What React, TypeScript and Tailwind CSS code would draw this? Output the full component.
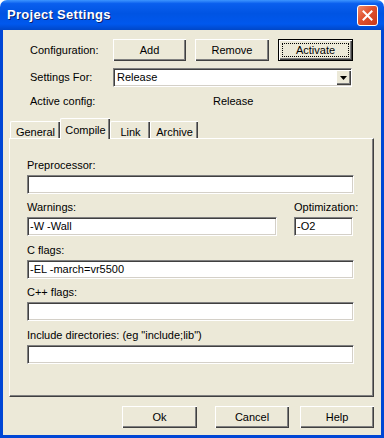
import React from 'react'

// XP (Luna) style dialog: Project Settings
const field =
  'h-[19px] bg-white border border-t-[#808080] border-l-[#808080] border-b-white border-r-white shadow-[inset_1px_1px_0_#404040,inset_-1px_-1px_0_#d4d0c8] px-[2px] flex items-center text-[11px] leading-none'

const raised =
  'bg-[#ECE9D8] shadow-[inset_1px_1px_0_#ffffff,inset_-1px_-1px_0_#404040,inset_-2px_-2px_0_#808080]'

const Button = ({ label, w, isDefault }: { label: string; w: string; isDefault?: boolean }) => {
  if (isDefault) {
    return (
      <div className={`${w} h-[22px] border border-black flex`}>
        <div className={`flex-1 ${raised} flex items-center justify-center p-[3px]`}>
          <div className="w-full h-full border border-dotted border-black flex items-center justify-center text-[11px]">
            {label}
          </div>
        </div>
      </div>
    )
  }
  return (
    <div className={`${w} h-[22px] ${raised} flex items-center justify-center text-[11px]`}>
      {label}
    </div>
  )
}

const Field = ({ label, value, w }: { label: string; value?: string; w: string }) => (
  <div className={`${w} flex flex-col`}>
    <div className="h-[14px] text-[11px] leading-[14px]">{label}</div>
    <div className={`mt-[3px] ${field}`}>{value}</div>
  </div>
)

const tabs = [
  { name: 'General', w: 'w-[50px]' },
  { name: 'Compile', w: 'w-[50px]', active: true },
  { name: 'Link', w: 'w-[40px]' },
  { name: 'Archive', w: 'w-[48px]' },
]

export default function App() {
  return (
    <div className="w-[384px] h-[438px] flex flex-col font-['Liberation_Sans',Arial,sans-serif] text-black select-none">
      {/* Title bar */}
      <div className="h-[30px] shrink-0 rounded-t-[7px] bg-[linear-gradient(to_bottom,#3D95FF_0%,#0A5FEE_12%,#0054E3_45%,#0058EE_80%,#0047C8_100%)] flex items-center pl-[7px] pr-[6px]">
        <span className="text-white font-bold text-[13px] tracking-[0.3px] [text-shadow:1px_1px_0_#0A1F6E]">
          Project Settings
        </span>
        <div className="ml-auto w-[21px] h-[21px] rounded-[3px] border border-white bg-[linear-gradient(135deg,#F08A6A_0%,#E0512E_45%,#C8391A_100%)] flex items-center justify-center">
          <svg width="11" height="11" viewBox="0 0 11 11">
            <path d="M1.5 1.5 L9.5 9.5 M9.5 1.5 L1.5 9.5" stroke="#fff" strokeWidth="2" strokeLinecap="square" />
          </svg>
        </div>
      </div>

      {/* Client area */}
      <div className="flex-1 bg-[#ECE9D8] border-x-[3px] border-b-[3px] border-[#0046D5] flex flex-col">
        <div className="pl-[27px] pt-[9px]">
          <div className="flex items-center h-[22px]">
            <div className="w-[83px] text-[11px]">Configuration:</div>
            <div className="flex gap-[9px]">
              <Button label="Add" w="w-[73px]" />
              <Button label="Remove" w="w-[74px]" />
              <Button label="Activate" w="w-[75px]" isDefault />
            </div>
          </div>

          <div className="flex items-center h-[19px] mt-[7px]">
            <div className="w-[83px] text-[11px]">Settings For:</div>
            <div className={`w-[239px] ${field} pr-0`}>
              <span className="pl-[1px]">Release</span>
              <div className={`ml-auto w-[15px] h-[15px] ${raised} flex items-center justify-center`}>
                <svg width="7" height="4" viewBox="0 0 7 4">
                  <path d="M0 0 H7 L3.5 4 Z" fill="#000" />
                </svg>
              </div>
            </div>
          </div>

          <div className="flex items-center h-[16px] mt-[6px]">
            <div className="w-[183px] text-[11px]">Active config:</div>
            <div className="text-[11px]">Release</div>
          </div>
        </div>

        {/* Tabs */}
        <div className="flex items-end ml-[7px] mt-[8px] h-[21px] relative z-10">
          {tabs.map((t) =>
            t.active ? (
              <div
                key={t.name}
                className={`${t.w} h-[21px] -mb-px bg-[#ECE9D8] border-t border-l border-white rounded-tl-[2px] shadow-[inset_-1px_0_0_#404040,inset_-2px_0_0_#808080] flex items-start justify-center pt-[3px] text-[11px]`}
              >
                {t.name}
              </div>
            ) : (
              <div
                key={t.name}
                className={`${t.w} h-[17px] bg-[#ECE9D8] border-t border-l border-white rounded-tl-[2px] shadow-[inset_-1px_0_0_#404040,inset_-2px_0_0_#808080] flex items-start justify-center pt-[2px] text-[11px]`}
              >
                {t.name}
              </div>
            )
          )}
        </div>

        {/* Tab panel */}
        <div className="ml-[6px] mr-[7px] h-[259px] border-t border-l border-white border-r border-b border-r-[#404040] border-b-[#404040] shadow-[inset_-1px_-1px_0_#808080] pl-[17px] pt-[19px] flex flex-col">
          <Field label="Preprocessor:" w="w-[327px]" />
          <div className="flex gap-[17px] mt-[6px]">
            <Field label="Warnings:" value="-W -Wall" w="w-[250px]" />
            <Field label="Optimization:" value="-O2" w="w-[59px]" />
          </div>
          <div className="mt-[7px]">
            <Field label="C flags:" value="-EL -march=vr5500" w="w-[327px]" />
          </div>
          <div className="mt-[6px]">
            <Field label="C++ flags:" w="w-[327px]" />
          </div>
          <div className="mt-[7px]">
            <Field label={'Include directories: (eg "include;lib")'} w="w-[327px]" />
          </div>
        </div>

        {/* Bottom buttons */}
        <div className="flex mt-[9px] pl-[119px] gap-[18px]">
          <Button label="Ok" w="w-[75px]" />
          <div className="flex gap-[11px]">
            <Button label="Cancel" w="w-[74px]" />
            <Button label="Help" w="w-[74px]" />
          </div>
        </div>
      </div>
    </div>
  )
}
